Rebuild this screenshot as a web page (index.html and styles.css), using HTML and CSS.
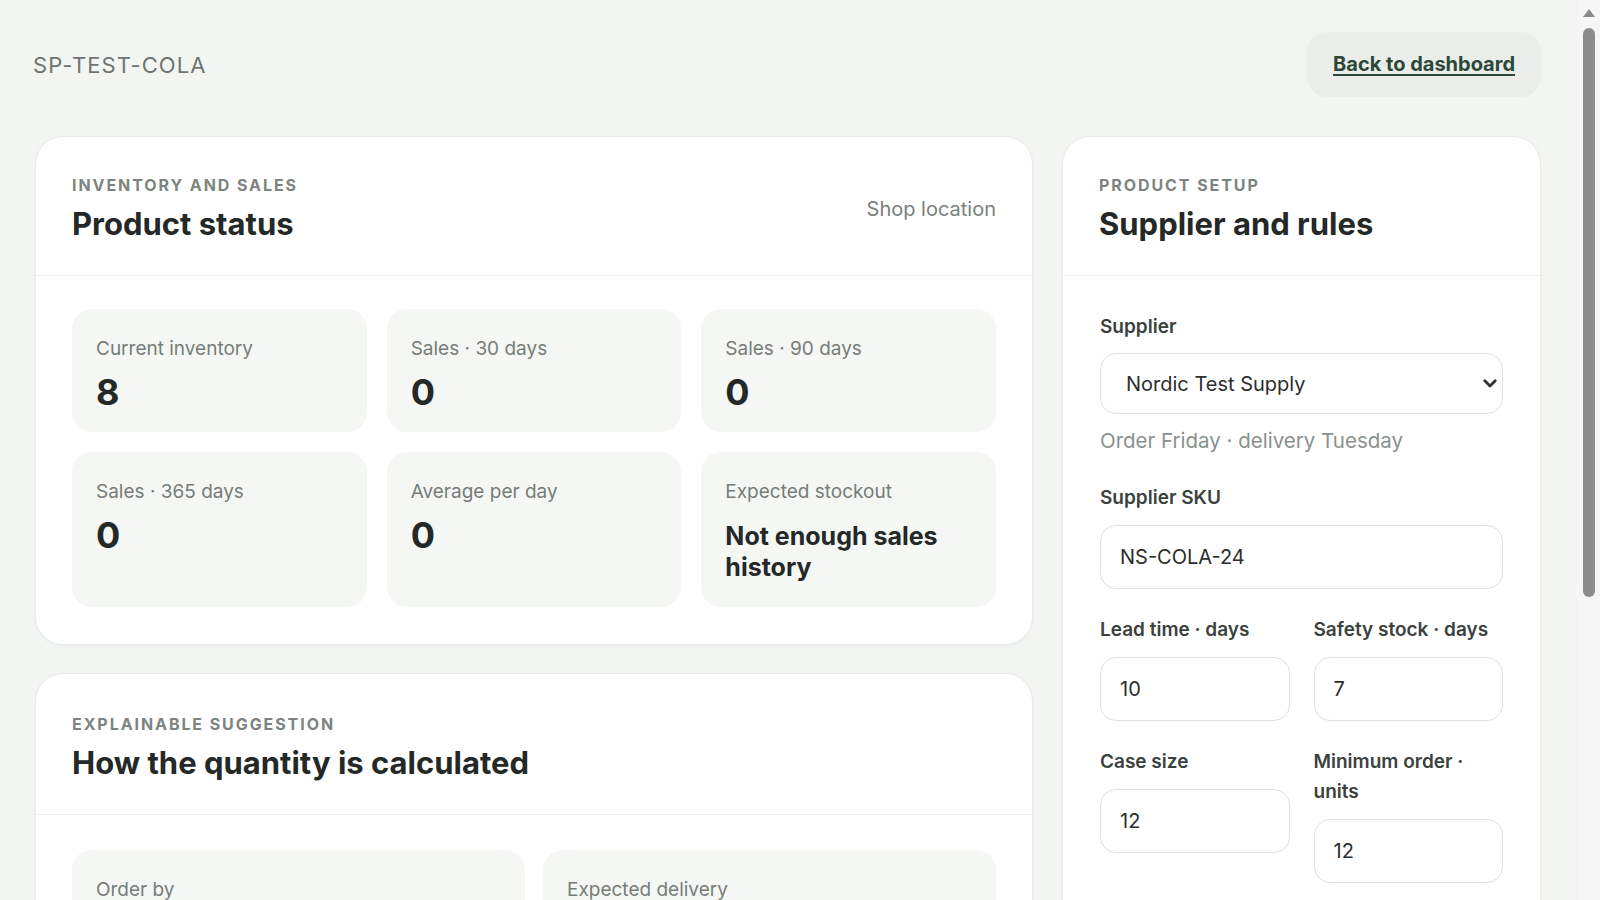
FILE: index.html
```html
<!DOCTYPE html>
<html lang="en">
<head>
<meta charset="utf-8">
<title>SP-TEST-COLA</title>
<link rel="stylesheet" href="styles.css">
</head>
<body>
<div class="app">
<div class="viewport">
<div class="page">
  <header class="topbar">
    <div class="sku">SP-TEST-COLA</div>
    <a class="back" href="#">Back to dashboard</a>
  </header>

  <div class="layout">
    <div class="col">
      <section class="card">
        <div class="card-head">
          <div>
            <div class="eyebrow">Inventory and sales</div>
            <h2 class="title">Product status</h2>
          </div>
          <div class="head-note">Shop location</div>
        </div>
        <div class="card-body grid3">
          <div class="tile">
            <div class="tile-label">Current inventory</div>
            <div class="tile-value">8</div>
          </div>
          <div class="tile">
            <div class="tile-label">Sales · 30 days</div>
            <div class="tile-value">0</div>
          </div>
          <div class="tile">
            <div class="tile-label">Sales · 90 days</div>
            <div class="tile-value">0</div>
          </div>
          <div class="tile">
            <div class="tile-label">Sales · 365 days</div>
            <div class="tile-value">0</div>
          </div>
          <div class="tile">
            <div class="tile-label">Average per day</div>
            <div class="tile-value">0</div>
          </div>
          <div class="tile">
            <div class="tile-label">Expected stockout</div>
            <div class="tile-value text">Not enough sales history</div>
          </div>
        </div>
      </section>

      <section class="card">
        <div class="card-head second">
          <div>
            <div class="eyebrow">Explainable suggestion</div>
            <h2 class="title">How the quantity is calculated</h2>
          </div>
        </div>
        <div class="card-body grid2 second-body">
          <div class="tile">
            <div class="tile-label">Order by</div>
            <div class="tile-value text">Friday</div>
          </div>
          <div class="tile">
            <div class="tile-label">Expected delivery</div>
            <div class="tile-value text">Tuesday</div>
          </div>
          <div class="tile">
            <div class="tile-label">Coverage period</div>
            <div class="tile-value">17</div>
          </div>
          <div class="tile">
            <div class="tile-label">Suggested quantity</div>
            <div class="tile-value">0</div>
          </div>
          <div class="steps">
            <div class="step"><span>Expected demand over lead time and safety stock</span><b>0</b></div>
            <div class="step"><span>Minus current inventory</span><b>8</b></div>
            <div class="step"><span>Rounded up to case size</span><b>0</b></div>
          </div>
        </div>
      </section>
    </div>

    <section class="card">
      <div class="card-head">
        <div>
          <div class="eyebrow">Product setup</div>
          <h2 class="title">Supplier and rules</h2>
        </div>
      </div>
      <form class="form">
        <div class="field">
          <label for="supplier">Supplier</label>
          <div class="select-wrap">
            <select id="supplier" class="input select">
              <option>Nordic Test Supply</option>
            </select>
            <svg class="chev" width="14" height="9" viewBox="0 0 14 9" aria-hidden="true"><path d="M1.8 1.8 L7 7 L12.2 1.8" fill="none" stroke="#2e3230" stroke-width="2.8" stroke-linecap="round" stroke-linejoin="round"/></svg>
          </div>
          <div class="help">Order Friday · delivery Tuesday</div>
        </div>
        <div class="field">
          <label for="ssku">Supplier SKU</label>
          <input id="ssku" class="input" type="text" value="NS-COLA-24">
        </div>
        <div class="pair">
          <div class="field">
            <label for="lead">Lead time · days</label>
            <input id="lead" class="input" type="text" value="10">
          </div>
          <div class="field">
            <label for="safety">Safety stock · days</label>
            <input id="safety" class="input" type="text" value="7">
          </div>
          <div class="field">
            <label for="case">Case size</label>
            <input id="case" class="input" type="text" value="12">
          </div>
          <div class="field">
            <label for="moq">Minimum order · units</label>
            <input id="moq" class="input" type="text" value="12">
          </div>
        </div>
        <button class="save" type="button">Save rules</button>
      </form>
    </section>
  </div>
</div>
</div>
<div class="scrollbar" aria-hidden="true">
  <svg class="scroll-arrow" width="14" height="10" viewBox="0 0 14 10"><path d="M7 1 L13 9 L1 9 Z" fill="#8a8a8a"/></svg>
  <div class="scroll-thumb"></div>
</div>
</div>
</body>
</html>
```

FILE: styles.css
```css
* {
  box-sizing: border-box;
}

html,
body {
  margin: 0;
  height: 100%;
  overflow: hidden;
}

body {
  background: #f3f5f3;
  font-family: Inter, "Noto Sans", "Liberation Sans", sans-serif;
  color: #242826;
}

.app {
  display: flex;
  height: 100vh;
  overflow: hidden;
}

.viewport {
  flex: 1 1 auto;
  min-width: 0;
  overflow: hidden;
}

.scrollbar {
  flex: 0 0 22px;
  display: flex;
  flex-direction: column;
  align-items: center;
  padding-top: 8px;
  background: #f5f6f5;
}

.scroll-arrow {
  display: block;
}

.scroll-thumb {
  margin-top: 10px;
  width: 12px;
  height: 569px;
  border-radius: 6px;
  background: #8c8c8c;
}

.page {
  padding: 32px 37px 40px 35px;
}

.topbar {
  display: flex;
  justify-content: space-between;
  align-items: center;
  margin-bottom: 39px;
}

.sku {
  font-size: 22px;
  letter-spacing: 0.05em;
  color: #6e7571;
  margin-left: -2px;
}

.back {
  background: #eaeeeb;
  border-radius: 20px;
  padding: 17px 26px;
  font-size: 20px;
  line-height: 31px;
  font-weight: 700;
  color: #2c4738;
  text-decoration: underline;
  text-underline-offset: 3px;
}

.layout {
  display: grid;
  grid-template-columns: minmax(0, 1fr) 479px;
  gap: 29px;
  align-items: start;
}

.col {
  display: flex;
  flex-direction: column;
  gap: 28px;
}

.card {
  background: #ffffff;
  border: 1px solid #e7ebe8;
  border-radius: 28px;
  box-shadow: 0 1px 3px rgba(30, 50, 40, 0.04);
}

.card-head {
  display: flex;
  justify-content: space-between;
  align-items: center;
  padding: 37px 36px 32px;
  border-bottom: 1px solid #eef1ef;
}

.card-head.second {
  padding-top: 39px;
}

.eyebrow {
  font-size: 16px;
  line-height: 22px;
  font-weight: 700;
  letter-spacing: 0.12em;
  text-transform: uppercase;
  color: #7d8480;
}

.title {
  margin: 9px 0 0;
  font-size: 31px;
  line-height: 38px;
  font-weight: 700;
  color: #242826;
}

.head-note {
  font-size: 20px;
  color: #7a817d;
}

.card-body {
  padding: 33px 36px 37px;
  display: grid;
  gap: 20px;
}

.card-body.second-body {
  padding-top: 35px;
}

.grid3 {
  grid-template-columns: repeat(3, minmax(0, 1fr));
}

.grid2 {
  grid-template-columns: repeat(2, minmax(0, 1fr));
  gap: 20px 18px;
}

.tile {
  background: #f5f7f5;
  border-radius: 20px;
  padding: 26px 24px 22px;
}

.tile-label {
  font-size: 19px;
  line-height: 27px;
  color: #767d79;
}

.tile-value {
  margin-top: 12px;
  font-size: 36px;
  line-height: 1;
  font-weight: 700;
  color: #242826;
}

.tile-value.text {
  margin: 16px 0 2px;
  font-size: 25px;
  line-height: 31px;
}

.steps {
  grid-column: 1 / -1;
  display: flex;
  flex-direction: column;
  gap: 12px;
  padding: 24px;
  border: 1px solid #e7ebe8;
  border-radius: 20px;
}

.step {
  display: flex;
  justify-content: space-between;
  font-size: 19px;
  line-height: 27px;
  color: #4a514d;
}

.form {
  padding: 36px 37px 40px;
  display: flex;
  flex-direction: column;
  gap: 26px;
}

.field {
  display: flex;
  flex-direction: column;
  gap: 12px;
}

.field label {
  font-size: 19px;
  line-height: 30px;
  font-weight: 600;
  color: #3b423e;
}

.input {
  height: 64px;
  width: 100%;
  border: 1px solid #dde2de;
  border-radius: 16px;
  padding: 0 19px;
  font-family: Inter, "Noto Sans", sans-serif;
  font-size: 20px;
  color: #2a2e2c;
  background: #ffffff;
}

.select-wrap {
  position: relative;
  margin-top: -1px;
}

.select {
  display: block;
  height: 61px;
  padding: 0 40px 0 25px;
  appearance: none;
  -webkit-appearance: none;
}

.chev {
  position: absolute;
  right: 6px;
  top: 26px;
  pointer-events: none;
}

.help {
  font-size: 20.5px;
  line-height: 30px;
  color: #8a918d;
  margin-bottom: 1px;
}

.pair {
  display: grid;
  grid-template-columns: repeat(2, minmax(0, 1fr));
  gap: 26px 24px;
  align-items: start;
}

.save {
  height: 60px;
  border: 0;
  border-radius: 16px;
  background: #2c4738;
  color: #ffffff;
  font-family: Inter, "Noto Sans", sans-serif;
  font-size: 20px;
  font-weight: 700;
}
```
